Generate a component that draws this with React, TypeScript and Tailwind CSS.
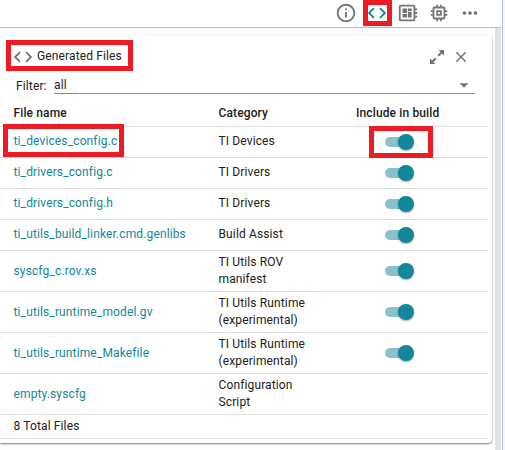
import { MdInfoOutline, MdCode, MdDeveloperBoard, MdMemory, MdMoreHoriz, MdClose, MdArrowDropDown } from "react-icons/md";

type FileRow = { name: string; category: string; toggle: boolean; tall: boolean; marked?: boolean };

const files: FileRow[] = [
  { name: "ti_devices_config.c", category: "TI Devices", toggle: true, tall: false, marked: true },
  { name: "ti_drivers_config.c", category: "TI Drivers", toggle: true, tall: false },
  { name: "ti_drivers_config.h", category: "TI Drivers", toggle: true, tall: false },
  { name: "ti_utils_build_linker.cmd.genlibs", category: "Build Assist", toggle: true, tall: false },
  { name: "syscfg_c.rov.xs", category: "TI Utils ROV manifest", toggle: true, tall: true },
  { name: "ti_utils_runtime_model.gv", category: "TI Utils Runtime (experimental)", toggle: true, tall: true },
  { name: "ti_utils_runtime_Makefile", category: "TI Utils Runtime (experimental)", toggle: true, tall: true },
  { name: "empty.syscfg", category: "Configuration Script", toggle: false, tall: true },
];

function Toggle() {
  return (
    <div className="flex h-4 w-[29px] items-center rounded-full">
      <div className="h-[10px] w-[21px] rounded-full bg-[#88c3cc]" />
      <div className="-ml-2 size-4 shrink-0 rounded-full bg-[#118799] shadow-[0_1px_2px_rgba(0,0,0,0.35)]" />
    </div>
  );
}

function ExpandIcon() {
  return (
    <svg width="14" height="14" viewBox="0 0 14 14" fill="#757575">
      <path d="M8.500 0H14v5.500l-2-2-3 3L7.500 5l3-3z" />
      <path d="M5.500 14H0V8.500l2 2 3-3L6.500 9l-3 3z" />
    </svg>
  );
}

export default function App() {
  return (
    <div className="flex h-[450px] w-[505px] overflow-hidden bg-white font-['Roboto','Liberation_Sans',sans-serif] text-xs tracking-[0.13px] text-[#212121]">
      <div className="flex w-[501px] flex-col">
        <header className="flex h-7 shrink-0 items-start gap-[9px] border-b border-[#bdbdbd] pl-[335px] pt-[2px] text-[22px] text-[#757575]">
          <MdInfoOutline />
          <div className="relative w-[22px]">
            <div className="absolute -left-[3px] -top-[2px] h-[26px] w-[29px] border-5 border-[#ed1c24]" />
            <MdCode className="text-[#118799]" />
          </div>
          <MdDeveloperBoard />
          <MdMemory />
          <MdMoreHoriz />
        </header>
        <div className="flex min-h-0 flex-1">
          <main className="w-[495px] bg-[#fdfdfd] pt-2">
            <section className="h-[407px] w-[492px] rounded-r bg-white pr-1 shadow-[0_1px_2px_rgba(0,0,0,0.5)]">
              <div className="relative flex h-[41px] items-center pl-3">
                <div className="absolute left-[6px] top-1 h-[31px] w-[127px] border-5 border-[#ed1c24]" />
                <MdCode className="text-[22px] text-[#757575]" />
                <h1 className="ml-[3px] flex-1 pb-[2px]">Generated Files</h1>
                <div className="mr-2"><ExpandIcon /></div>
                <MdClose className="mr-[18px] text-[18px] text-[#757575]" />
              </div>
              <div className="flex h-[18px] pl-4">
                <span className="w-[38px] pt-[1px]">Filter:</span>
                <div className="flex h-[17px] w-[421px] items-center justify-between border-b border-[#8a8a8a]">
                  <span>all</span>
                  <MdArrowDropDown className="text-[22px] text-[#757575]" />
                </div>
              </div>
              <div className="flex h-8 items-center border-b border-[#e0e0e0] pl-[13.5px] pt-1 font-medium">
                <span className="w-[205px]">File name</span>
                <span className="w-[137.5px]">Category</span>
                <span>Include in build</span>
              </div>
              {files.map((f) => (
                <div key={f.name} className={`relative flex items-center border-b border-[#e0e0e0] pl-[13.5px] ${f.tall ? "h-[41px]" : "h-[31px]"}`}>
                  {f.marked && (
                    <>
                      <div className="absolute -top-[3px] left-[3px] h-[33px] w-[121px] border-5 border-[#ed1c24]" />
                      <div className="absolute -top-[1px] left-[369px] h-8 w-16 border-5 border-[#ed1c24]" />
                    </>
                  )}
                  <span className={`w-[205px] text-[#118799] ${f.tall ? "pb-[1px]" : "pb-[2px]"}`}>{f.name}</span>
                  <span className={`mr-[66.5px] w-[100px] leading-[17px] ${f.tall ? "" : "pb-[2px]"}`}>{f.category}</span>
                  {f.toggle && <Toggle />}
                </div>
              ))}
              <div className="flex h-6 items-center border-b border-[#e0e0e0] pb-[1px] pl-[13.5px]">8 Total Files</div>
            </section>
          </main>
          <div className="w-[6px] bg-[#e2e2e2]" />
        </div>
      </div>
      <div className="ml-[1px] w-[1px] bg-[#b9c3dc]" />
      <div className="flex-1 bg-[#f4f6fc]" />
    </div>
  );
}
